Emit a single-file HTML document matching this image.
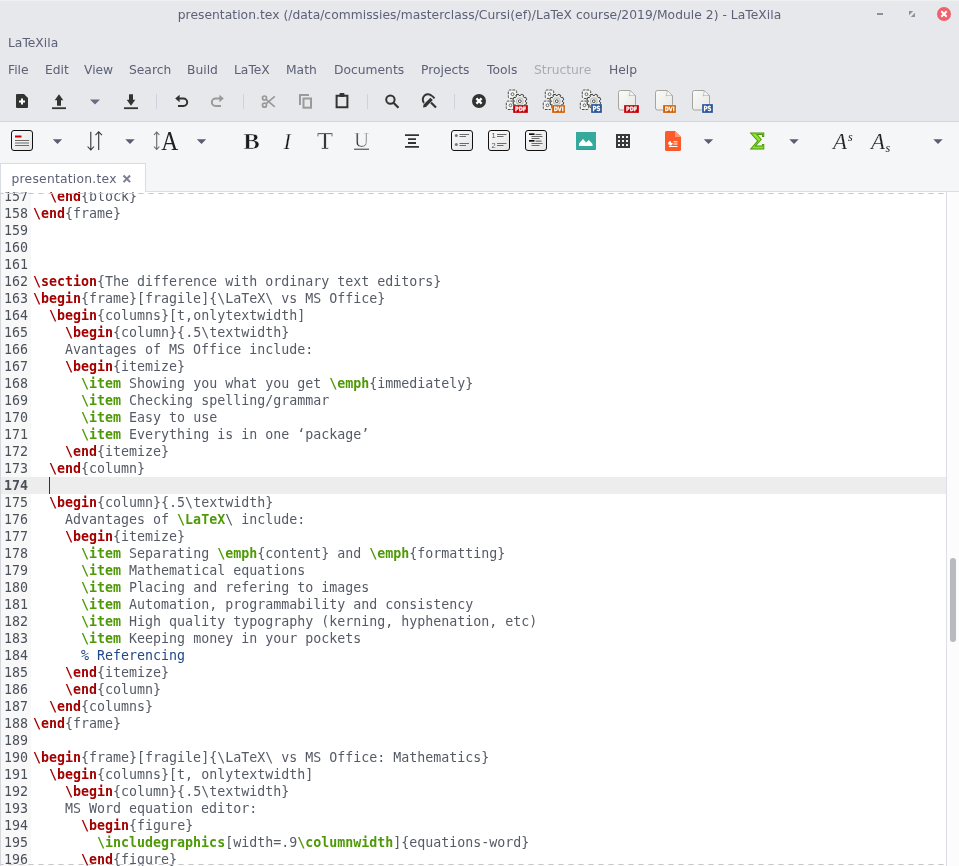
<!DOCTYPE html>
<html><head><meta charset="utf-8"><title>LaTeXila</title>
<style>
html,body{margin:0;padding:0;}
body{width:959px;height:866px;overflow:hidden;background:#e7e8eb;position:relative;font-family:"DejaVu Sans","Liberation Sans",sans-serif;font-size:12.3px;color:#5c6177;}
.abs{position:absolute;}
#title{position:absolute;left:0;top:1px;letter-spacing:0.03px;width:959px;height:28px;line-height:28px;text-align:center;white-space:nowrap;}
#title span{position:relative;}
#app{position:absolute;left:8px;top:34px;height:18px;line-height:18px;}
.mi{position:absolute;top:61px;height:18px;line-height:18px;white-space:nowrap;}
.mi.dis{color:#a9acb2;}
#tb2{position:absolute;left:0;top:121px;width:959px;height:72px;background:#f5f6f7;border-top:1px solid #d3d5db;box-sizing:border-box;}
#tabline{position:absolute;left:0;top:191px;width:959px;height:1px;background:#dcdfe3;}
#tab{position:absolute;left:0;top:163px;width:146px;height:29px;background:#fff;border:1px solid #d9dce2;border-bottom:none;box-sizing:border-box;}
#tab .t{position:absolute;left:10.500px;top:6px;line-height:18px;letter-spacing:0.25px;}
#ed{position:absolute;left:0;top:192px;width:946px;height:674px;background:#fff;overflow:hidden;border-left:1px solid #d5d7de;box-sizing:border-box;}
#gut{position:absolute;left:0;top:0;width:30px;height:674px;background:#f8f8f9;}
#dash1,#dash2{position:absolute;left:0;width:945px;height:1px;background:linear-gradient(90deg,#c6c6c6 0,#c6c6c6 3px,#e0e0e0 3px,#e0e0e0 4px,transparent 4px,transparent 8px,#e0e0e0 8px,#e0e0e0 9px,#c6c6c6 9px,#c6c6c6 10px);background-size:10px 1px;background-position:-1px 0;}
#code{position:absolute;left:0;top:-4px;width:945px;font-family:"DejaVu Sans Mono","Liberation Mono",monospace;font-size:13.3px;color:#555a65;}
.ln{height:17px;line-height:17px;white-space:pre;position:relative;}
.ln.cur{background:#ededed;}
.ln.cur .no{font-weight:bold;}
.no{position:absolute;left:3px;top:0;color:#4a505a;}
.tx{position:absolute;left:32px;top:0;}
.k{color:#a40000;font-weight:bold;}
.g{color:#4e9a06;font-weight:bold;}
.c{color:#204a87;}
#caret{position:absolute;left:48px;top:285px;width:1px;height:17px;background:#333;}
#sb{position:absolute;left:946px;top:192px;width:13px;height:674px;background:#fcfcfc;border-left:1px solid #dcdfe3;box-sizing:border-box;}
#thumb{position:absolute;left:3px;top:366px;width:6px;height:84px;border-radius:3px;background:#b8babf;}
#wrap{position:absolute;left:0;top:0;width:959px;height:866px;will-change:transform;}
</style></head><body><div id="wrap">
<div class="abs" style="left:0;top:0;width:959px;height:1px;background:#eef0f2"></div>
<div id="title"><span>presentation.tex (/data/commissies/masterclass/Cursi(ef)/LaTeX course/2019/Module 2) - LaTeXila</span></div>
<div id="app">LaTeXila</div>
<div class="mi" style="left:8px">File</div>
<div class="mi" style="left:45px">Edit</div>
<div class="mi" style="left:84px">View</div>
<div class="mi" style="left:129px">Search</div>
<div class="mi" style="left:187px">Build</div>
<div class="mi" style="left:234px">LaTeX</div>
<div class="mi" style="left:286px">Math</div>
<div class="mi" style="left:334px">Documents</div>
<div class="mi" style="left:421px">Projects</div>
<div class="mi" style="left:487px">Tools</div>
<div class="mi dis" style="left:534px">Structure</div>
<div class="mi" style="left:609px">Help</div>
<svg class="abs" style="left:0;top:0" width="959" height="121" viewBox="0 0 959 121">
<defs>
<linearGradient id="pg" x1="0" y1="0" x2="1" y2="1"><stop offset="0" stop-color="#fbfbfa"/><stop offset="1" stop-color="#e6e6e2"/></linearGradient>
<g id="gearS"><rect x="-4.200" y="-4.200" width="8.400" height="8.400" rx="1.700" fill="#f4f4f2" stroke="#4a4c48" stroke-width="1" stroke-dasharray="2.700 1" stroke-dashoffset="1.300"/><circle r="1.400" fill="#fff" stroke="#555" stroke-width=".9"/></g>
<g id="gears">
<use href="#gearS" x="-7.300" y="-7"/>
<use href="#gearS" x="-9.300" y="4.100"/>
<path d="M5.67 0.63L6.95 1.44L5.93 3.90L4.45 3.56L3.56 4.45L3.90 5.93L1.44 6.95L0.63 5.67L-0.63 5.67L-1.44 6.95L-3.90 5.93L-3.56 4.45L-4.45 3.56L-5.93 3.90L-6.95 1.44L-5.67 0.63L-5.67 -0.63L-6.95 -1.44L-5.93 -3.90L-4.45 -3.56L-3.56 -4.45L-3.90 -5.93L-1.44 -6.95L-0.63 -5.67L0.63 -5.67L1.44 -6.95L3.90 -5.93L3.56 -4.45L4.45 -3.56L5.93 -3.90L6.95 -1.44L5.67 -0.63z" fill="#eeeeec" stroke="#30322e" stroke-width="1" stroke-linejoin="round"/>
<circle r="3.300" fill="#f4f4f2" stroke="#c0c2bd" stroke-width="1.200"/><circle r="1.400" fill="#fff" stroke="#444" stroke-width="1"/>
</g>
<g id="page"><path d="M.5 2.5a2 2 0 0 1 2-2h9.5l5.5 5.500v12a2 2 0 0 1-2 2h-13a2 2 0 0 1-2-2z" fill="url(#pg)" stroke="#a4a4a0" stroke-width="1"/><path d="M12 .5c.3 2.500-.3 4.500-1 5.500 1.500-.8 4-1 6.500-.5z" fill="#fff" stroke="#a8a8a4" stroke-width=".7"/></g>
</defs>
<!-- window buttons -->
<rect x="877" y="13" width="6" height="2" fill="#8b90a1"/>
<path d="M909 11h4.200l-4.200 4.200zM915 17h-4.200l4.200-4.200z" transform="translate(0,0)" fill="#8b90a1"/>
<circle cx="944" cy="14" r="7" fill="#f0616e"/>
<path d="M941.300 11.300l5.400 5.400M946.700 11.300l-5.400 5.400" stroke="#fff" stroke-width="2" fill="none"/>
<!-- new doc -->
<path d="M17 94h7l4 4v9a1 1 0 0 1-1 1h-10a1 1 0 0 1-1-1v-12a1 1 0 0 1 1-1z" fill="#333"/>
<path d="M22 98.500v6M19 101.500h6" stroke="#fff" stroke-width="2"/>
<!-- open/upload -->
<path d="M59 94.300l4.300 6h-2.300v5.500h-4v-5.500h-2.300z" fill="#333"/><rect x="52" y="107.300" width="14" height="1.800" fill="#333"/>
<path d="M90 99.500h10l-5 5z" fill="#676c84"/>
<!-- save/download -->
<path d="M131 105.800l4.300-6h-2.300v-5.500h-4v5.500h-2.300z" fill="#333"/><rect x="124" y="107.300" width="14" height="1.800" fill="#333"/>
<rect x="156" y="94" width="1" height="15" fill="#cfd2da"/>
<!-- undo -->
<path d="M177 98.500h6.500a3.700 3.700 0 0 1 0 7.400h-5.500" fill="none" stroke="#333" stroke-width="2"/><path d="M175.200 98.500l4.400-3.800v7.600z" fill="#333"/>
<!-- redo -->
<path d="M222 98.500h-6.500a3.700 3.700 0 0 0 0 7.400h5.500" fill="none" stroke="#9a9a9a" stroke-width="2"/><path d="M223.800 98.500l-4.400-3.800v7.600z" fill="#9a9a9a"/>
<rect x="243" y="94" width="1" height="15" fill="#cfd2da"/>
<!-- cut -->
<g stroke="#9a9a9a" fill="none" stroke-width="1.700"><circle cx="264.500" cy="98" r="2"/><circle cx="264.500" cy="105.200" r="2"/><path d="M266 99.300l8.800 7.500M266 103.900l8.800-7.500"/></g>
<!-- copy -->
<g stroke="#9a9a9a" fill="none" stroke-width="2"><path d="M309 95h-9v10"/><rect x="303.500" y="98.500" width="7.500" height="9.200"/></g>
<!-- paste -->
<path d="M336.600 95.800h10.800v11.400h-10.800z" fill="none" stroke="#333" stroke-width="2"/><rect x="339.500" y="93" width="5" height="4" rx="1" fill="#333"/>
<rect x="367" y="94" width="1" height="15" fill="#cfd2da"/>
<!-- search -->
<circle cx="390.400" cy="99.600" r="4.200" fill="none" stroke="#333" stroke-width="2"/><path d="M393.500 102.700l5 5" stroke="#333" stroke-width="2.200"/>
<!-- replace -->
<path d="M424 103a5 5 0 0 1 8-6.800" fill="none" stroke="#333" stroke-width="2"/><path d="M423 107.500l.6-3 6.800-6.800 2.400 2.400-6.800 6.800zM431.500 96.600l1.300-1.300 2.400 2.400-1.300 1.300z" fill="#333"/><path d="M431 102.500l5 5" stroke="#333" stroke-width="2.200"/>
<rect x="454" y="94" width="1" height="15" fill="#cfd2da"/>
<!-- stop -->
<circle cx="479" cy="101" r="7" fill="#333"/><path d="M476.400 98.400l5.200 5.200M481.600 98.400l-5.200 5.200" stroke="#fff" stroke-width="2.200"/>
<!-- build icons -->
<g font-family="'DejaVu Sans','Liberation Sans',sans-serif" font-weight="bold" font-size="5.900" fill="#fff" stroke="#fff" stroke-width=".25">
<use href="#gears" x="519.800" y="101.200"/><rect x="513" y="105" width="15" height="8" fill="#c4000a"/><text x="515" y="111.200" textLength="11.200" lengthAdjust="spacingAndGlyphs">PDF</text>
<use href="#gears" x="556.800" y="101.200"/><rect x="552" y="105" width="13" height="8" fill="#ce5c00"/><text x="553.700" y="111.200" textLength="9.800" lengthAdjust="spacingAndGlyphs">DVI</text>
<use href="#gears" x="593.800" y="101.200"/><rect x="591" y="104" width="11" height="9" fill="#2a5598"/><text x="592.500" y="111.300" font-size="7" textLength="8" lengthAdjust="spacingAndGlyphs">PS</text>
<use href="#page" x="618" y="90"/><rect x="624" y="105" width="15" height="8" fill="#c4000a"/><text x="626" y="111.200" textLength="11.200" lengthAdjust="spacingAndGlyphs">PDF</text>
<use href="#page" x="655" y="90"/><rect x="663" y="105" width="13" height="8" fill="#ce5c00"/><text x="664.700" y="111.200" textLength="9.800" lengthAdjust="spacingAndGlyphs">DVI</text>
<use href="#page" x="692" y="90"/><rect x="702" y="104" width="11" height="9" fill="#2a5598"/><text x="703.500" y="111.300" font-size="7" textLength="8" lengthAdjust="spacingAndGlyphs">PS</text>
</g>
</svg>

<div id="tb2">
<svg class="abs" style="left:0;top:-1px" width="959" height="72" viewBox="0 121 959 72">
<defs>
<linearGradient id="bx" x1="0" y1="0" x2="1" y2="1"><stop offset="0" stop-color="#fbfbfb"/><stop offset="1" stop-color="#e4e4e4"/></linearGradient>
<rect id="box" x=".5" y=".5" width="21" height="20" rx="2.500" fill="url(#bx)" stroke="#111" stroke-width="1"/>
<path id="dd" d="M-4.700 0h9.400l-4.700 4.800z" fill="#585d72"/>
</defs>
<!-- sectioning -->
<use href="#box" x="11" y="130"/><rect x="15" y="135.500" width="6.500" height="2" fill="#cc0000"/><path d="M15 140.500h14M15 143h14M15 145.500h14" stroke="#6a6a6a" stroke-width="1.2"/>
<use href="#dd" x="57.500" y="139.300"/>
<!-- up/down arrows -->
<g stroke="#333" stroke-width="1.100" fill="none"><path d="M90.800 131.700v18M87.600 146.500l3.200 3.500 3.200-3.500"/><path d="M98.700 150v-18M95.500 135.200l3.200-3.500 3.200 3.500"/></g>
<use href="#dd" x="130" y="139.300"/>
<!-- size A -->
<g stroke="#666" stroke-width="1.100" fill="none"><path d="M156.700 132v17.500M154 135l2.700-3 2.700 3M154 146.500l2.700 3 2.700-3"/></g>
<text x="161.300" y="149.500" font-family="'Liberation Serif',serif" font-size="26.500" fill="#222" textLength="17" lengthAdjust="spacingAndGlyphs">A</text>
<use href="#dd" x="201.500" y="139.300"/>
<g font-family="'Liberation Serif',serif" fill="#1a1a1a" stroke="#f5f6f7">
<text x="243.200" y="148.500" font-size="22.600" font-weight="bold" textLength="16.600" lengthAdjust="spacingAndGlyphs" stroke-width=".55">B</text>
<text x="283.400" y="148.500" font-size="22.600" font-style="italic" stroke-width=".25">I</text>
<text x="317" y="149.400" font-family="'DejaVu Serif',serif" font-size="23" textLength="16" lengthAdjust="spacingAndGlyphs" stroke-width=".5" fill="#222">T</text>
<text x="354" y="146.600" font-size="21" fill="#333" textLength="15" lengthAdjust="spacingAndGlyphs" stroke-width=".5">U</text>
</g>
<rect x="354" y="148.700" width="15" height="1" fill="#333"/>
<!-- center -->
<path d="M405 135.200h14M408 139.100h8M408 143h8M405 146.900h14" stroke="#333" stroke-width="1.800"/>
<!-- itemize -->
<use href="#box" x="451" y="130"/><circle cx="456.300" cy="135.400" r="1.500" fill="#777"/><circle cx="456.300" cy="144.500" r="1.500" fill="#777"/><path d="M459.500 134.500h9.500M459.500 136.500h6.500M459.500 143.500h9.500M459.500 145.500h6.500" stroke="#6a6a6a" stroke-width="1.2"/>
<!-- enumerate -->
<use href="#box" x="488" y="130"/><g font-family="'Liberation Sans',sans-serif" font-size="7.500" fill="#555"><text x="491.500" y="138.300">1</text><text x="491.500" y="147.500">2</text></g><path d="M497 134.500h9.500M497 136.500h6.500M497 143.500h9.500M497 145.500h6.500" stroke="#6a6a6a" stroke-width="1.2"/>
<!-- description -->
<use href="#box" x="525" y="130"/><rect x="529" y="133.300" width="5.500" height="1.700" fill="#111"/><rect x="529" y="140" width="5.500" height="1.700" fill="#111"/><path d="M535.500 134.500h6M531.500 136.500h11M531.500 138.500h8M535.500 141.200h6M531.500 143.500h11M531.500 145.500h8" stroke="#6a6a6a" stroke-width="1.2"/>
<!-- image -->
<rect x="576" y="132" width="20" height="18" rx="1" fill="#2f9e92"/><rect x="576" y="132" width="20" height="17" rx="1" fill="#35a99c"/><path d="M579 146v-2.500l4-4.500 3.200 3.500 2.600-2.500 3.700 4v2z" fill="#fff"/>
<!-- grid -->
<rect x="616" y="134" width="14" height="14" fill="#3a3a3a"/><g fill="#f5f6f7"><rect x="618" y="136" width="2" height="2"/><rect x="622" y="136" width="2" height="2"/><rect x="626" y="136" width="2" height="2"/><rect x="618" y="140" width="2" height="2"/><rect x="622" y="140" width="2" height="2"/><rect x="626" y="140" width="2" height="2"/><rect x="618" y="144" width="2" height="2"/><rect x="622" y="144" width="2" height="2"/><rect x="626" y="144" width="2" height="2"/></g>
<!-- presentation doc -->
<path d="M666.500 131h8.500l6 6v12.500a1.500 1.500 0 0 1-1.500 1.500h-13a1.500 1.500 0 0 1-1.500-1.500v-17a1.500 1.500 0 0 1 1.500-1.500z" fill="#fc5a28"/><path d="M675 131l6 6h-6z" fill="#ff9a78"/><path d="M670.500 141.500a1.800 1.800 0 1 0 1.800 1.800h-1.800zM673.500 141.800h4M673.500 144h4M669 146.500h8.500" fill="#fff" stroke="#fff" stroke-width="1"/>
<use href="#dd" x="708.500" y="139.300"/>
<!-- sigma -->
<text x="749.800" y="149.300" font-family="'DejaVu Serif','Liberation Serif',serif" font-weight="bold" font-size="23" fill="#8ae234" stroke="#4e9a06" stroke-width="1" textLength="15.500" lengthAdjust="spacingAndGlyphs">Σ</text>
<use href="#dd" x="794" y="139.300"/>
<g font-family="'Liberation Serif',serif" font-style="italic" fill="#222" stroke="#f5f6f7" stroke-width=".2">
<text x="833" y="148.800" font-size="23">A</text><text x="848" y="140.500" font-size="12" stroke="none">s</text>
<text x="871" y="148.800" font-size="23">A</text><text x="885.500" y="152.300" font-size="12" stroke="none">s</text>
</g>
<use href="#dd" x="938" y="139.300"/>
</svg>

</div>
<div id="tabline"></div>
<div id="tab"><span class="t">presentation.tex</span><svg class="abs" style="left:120px;top:9px" width="12" height="12" viewBox="0 0 12 12"><path d="M2.500 2.500l6.600 6.600M9.100 2.500l-6.600 6.600" stroke="#7a7f92" stroke-width="2" fill="none"/></svg></div>
<div id="ed">
<div id="gut"></div>
<div id="code">
<div class="ln"><span class="no">157</span><span class="tx">  <span class="k">\end</span>{block}</span></div>
<div class="ln"><span class="no">158</span><span class="tx"><span class="k">\end</span>{frame}</span></div>
<div class="ln"><span class="no">159</span><span class="tx"></span></div>
<div class="ln"><span class="no">160</span><span class="tx"></span></div>
<div class="ln"><span class="no">161</span><span class="tx"></span></div>
<div class="ln"><span class="no">162</span><span class="tx"><span class="k">\section</span>{The difference with ordinary text editors}</span></div>
<div class="ln"><span class="no">163</span><span class="tx"><span class="k">\begin</span>{frame}[fragile]{\LaTeX\ vs MS Office}</span></div>
<div class="ln"><span class="no">164</span><span class="tx">  <span class="k">\begin</span>{columns}[t,onlytextwidth]</span></div>
<div class="ln"><span class="no">165</span><span class="tx">    <span class="k">\begin</span>{column}{.5\textwidth}</span></div>
<div class="ln"><span class="no">166</span><span class="tx">    Avantages of MS Office include:</span></div>
<div class="ln"><span class="no">167</span><span class="tx">    <span class="k">\begin</span>{itemize}</span></div>
<div class="ln"><span class="no">168</span><span class="tx">      <span class="g">\item</span> Showing you what you get <span class="g">\emph</span>{immediately}</span></div>
<div class="ln"><span class="no">169</span><span class="tx">      <span class="g">\item</span> Checking spelling/grammar</span></div>
<div class="ln"><span class="no">170</span><span class="tx">      <span class="g">\item</span> Easy to use</span></div>
<div class="ln"><span class="no">171</span><span class="tx">      <span class="g">\item</span> Everything is in one ‘package’</span></div>
<div class="ln"><span class="no">172</span><span class="tx">    <span class="k">\end</span>{itemize}</span></div>
<div class="ln"><span class="no">173</span><span class="tx">  <span class="k">\end</span>{column}</span></div>
<div class="ln cur"><span class="no">174</span><span class="tx"></span></div>
<div class="ln"><span class="no">175</span><span class="tx">  <span class="k">\begin</span>{column}{.5\textwidth}</span></div>
<div class="ln"><span class="no">176</span><span class="tx">    Advantages of <span class="g">\LaTeX</span>\ include:</span></div>
<div class="ln"><span class="no">177</span><span class="tx">    <span class="k">\begin</span>{itemize}</span></div>
<div class="ln"><span class="no">178</span><span class="tx">      <span class="g">\item</span> Separating <span class="g">\emph</span>{content} and <span class="g">\emph</span>{formatting}</span></div>
<div class="ln"><span class="no">179</span><span class="tx">      <span class="g">\item</span> Mathematical equations</span></div>
<div class="ln"><span class="no">180</span><span class="tx">      <span class="g">\item</span> Placing and refering to images</span></div>
<div class="ln"><span class="no">181</span><span class="tx">      <span class="g">\item</span> Automation, programmability and consistency</span></div>
<div class="ln"><span class="no">182</span><span class="tx">      <span class="g">\item</span> High quality typography (kerning, hyphenation, etc)</span></div>
<div class="ln"><span class="no">183</span><span class="tx">      <span class="g">\item</span> Keeping money in your pockets</span></div>
<div class="ln"><span class="no">184</span><span class="tx">      <span class="c">% Referencing</span></span></div>
<div class="ln"><span class="no">185</span><span class="tx">    <span class="k">\end</span>{itemize}</span></div>
<div class="ln"><span class="no">186</span><span class="tx">    <span class="k">\end</span>{column}</span></div>
<div class="ln"><span class="no">187</span><span class="tx">  <span class="k">\end</span>{columns}</span></div>
<div class="ln"><span class="no">188</span><span class="tx"><span class="k">\end</span>{frame}</span></div>
<div class="ln"><span class="no">189</span><span class="tx"></span></div>
<div class="ln"><span class="no">190</span><span class="tx"><span class="k">\begin</span>{frame}[fragile]{\LaTeX\ vs MS Office: Mathematics}</span></div>
<div class="ln"><span class="no">191</span><span class="tx">  <span class="k">\begin</span>{columns}[t, onlytextwidth]</span></div>
<div class="ln"><span class="no">192</span><span class="tx">    <span class="k">\begin</span>{column}{.5\textwidth}</span></div>
<div class="ln"><span class="no">193</span><span class="tx">    MS Word equation editor:</span></div>
<div class="ln"><span class="no">194</span><span class="tx">      <span class="k">\begin</span>{figure}</span></div>
<div class="ln"><span class="no">195</span><span class="tx">        <span class="g">\includegraphics</span>[width=.9<span class="g">\columnwidth</span>]{equations-word}</span></div>
<div class="ln"><span class="no">196</span><span class="tx">      <span class="k">\end</span>{figure}</span></div>
</div>
<div id="caret"></div>
<div id="dash1" style="top:1px"></div>
<div id="dash2" style="top:672px"></div>
</div>
<div id="sb"><div id="thumb"></div></div>
</div></body></html>
